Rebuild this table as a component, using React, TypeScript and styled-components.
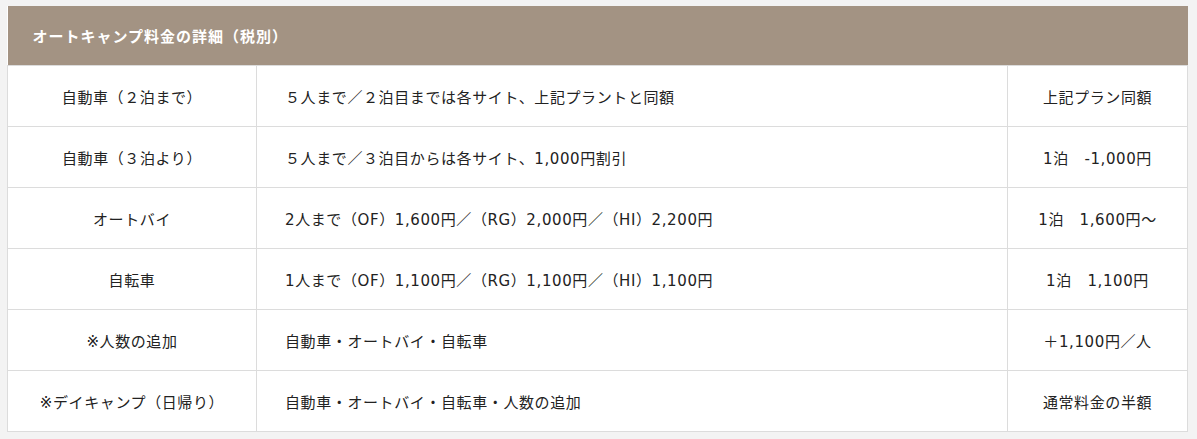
import React from 'react';
import styled, {createGlobalStyle} from "styled-components";

const rows = [
  {name: "自動車（２泊まで）", detail: "５人まで／２泊目までは各サイト、上記プラントと同額", price: "上記プラン同額"},
  {name: "自動車（３泊より）", detail: "５人まで／３泊目からは各サイト、1,000円割引", price: "1泊　-1,000円"},
  {name: "オートバイ", detail: "2人まで（OF）1,600円／（RG）2,000円／（HI）2,200円", price: "1泊　1,600円～"},
  {name: "自転車", detail: "1人まで（OF）1,100円／（RG）1,100円／（HI）1,100円", price: "1泊　1,100円"},
  {name: "※人数の追加", detail: "自動車・オートバイ・自転車", price: "＋1,100円／人"},
  {name: "※デイキャンプ（日帰り）", detail: "自動車・オートバイ・自転車・人数の追加", price: "通常料金の半額"},
]

const App = () => {
  return (
    <>
      <GlobalStyle/>
      <Page>
        <PriceTable>
          <colgroup>
            <Col $width={249}/>
            <Col $width={751}/>
            <Col $width={180}/>
          </colgroup>
          <thead>
            <tr>
              <HeadCell colSpan={3}>オートキャンプ料金の詳細（税別）</HeadCell>
            </tr>
          </thead>
          <tbody>
            {rows.map((row) => (
              <tr key={row.name}>
                <Cell $align="center">{row.name}</Cell>
                <Cell $align="left">{row.detail}</Cell>
                <Cell $align="center">{row.price}</Cell>
              </tr>
            ))}
          </tbody>
        </PriceTable>
      </Page>
    </>
  );
};

const GlobalStyle = createGlobalStyle`
  body {
    margin: 0;
    background: #f3f3f3;
    font-family: "DejaVu Sans", "Noto Sans CJK JP", sans-serif;
  }
`;
const Page = styled.div`
  padding: 6px 10px 8px 7px;
`;
const PriceTable = styled.table`
  width: 1180px;
  border-collapse: collapse;
  table-layout: fixed;
  background: #fff;
`;
const Col = styled.col<{ $width: number }>`
  width: ${(p) => p.$width}px;
`;
const HeadCell = styled.th`
  height: 59px;
  padding: 0 25px;
  background: #a39383;
  color: #fff;
  font-size: 15px;
  font-weight: 700;
  text-align: left;
  letter-spacing: 1px;
`;
const Cell = styled.td<{ $align: string }>`
  height: 60px;
  padding: 0 ${(p) => (p.$align === "left" ? "28px" : "8px")};
  border: 1px solid #dcdcdc;
  color: #222;
  font-size: 15px;
  text-align: ${(p) => p.$align};
  vertical-align: middle;
  white-space: nowrap;
  letter-spacing: 0.6px;
`;

export default App;
